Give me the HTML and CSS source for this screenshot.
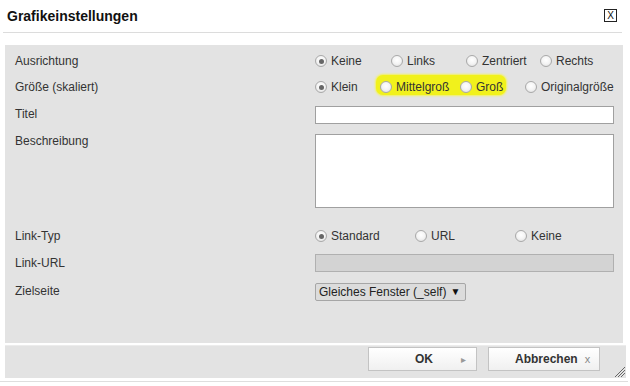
FILE: index.html
```html
<!DOCTYPE html>
<html lang="de">
<head>
<meta charset="utf-8">
<title>Grafikeinstellungen</title>
<link rel="stylesheet" href="styles.css">
</head>
<body>
<div class="dialog">
  <div class="titlebar">
    <span class="title">Grafikeinstellungen</span>
    <span class="close">X</span>
  </div>
  <div class="panel">
    <div class="row">
      <div class="label">Ausrichtung</div>
      <div class="opts opts-align">
        <label class="opt"><span class="radio on"></span>Keine</label>
        <label class="opt"><span class="radio"></span>Links</label>
        <label class="opt"><span class="radio"></span>Zentriert</label>
        <label class="opt"><span class="radio"></span>Rechts</label>
      </div>
    </div>
    <div class="row">
      <div class="label">Größe (skaliert)</div>
      <div class="opts opts-size">
        <label class="opt"><span class="radio on"></span>Klein</label>
        <span class="marker">
          <label class="opt opt-mid"><span class="radio"></span>Mittelgroß</label>
          <label class="opt"><span class="radio"></span>Groß</label>
        </span>
        <label class="opt opt-orig"><span class="radio"></span>Originalgröße</label>
      </div>
    </div>
    <div class="row row-input">
      <div class="label">Titel</div>
      <div class="field"><span class="input"></span></div>
    </div>
    <div class="row row-area">
      <div class="label">Beschreibung</div>
      <div class="field"><span class="textarea"></span></div>
    </div>
    <div class="row row-link">
      <div class="label">Link-Typ</div>
      <div class="opts opts-link">
        <label class="opt"><span class="radio on"></span>Standard</label>
        <label class="opt"><span class="radio"></span>URL</label>
        <label class="opt"><span class="radio"></span>Keine</label>
      </div>
    </div>
    <div class="row row-url">
      <div class="label">Link-URL</div>
      <div class="field"><span class="input disabled"></span></div>
    </div>
    <div class="row row-target">
      <div class="label">Zielseite</div>
      <div class="field"><span class="select">Gleiches Fenster (_self) <span class="caret">▼</span></span></div>
    </div>
  </div>
  <div class="footer">
    <button class="btn btn-ok">OK <span class="btn-icon arrow">&#9656;</span></button>
    <button class="btn btn-cancel">Abbrechen <span class="btn-icon">x</span></button>
    <svg class="grip" width="12" height="12" viewBox="0 0 12 12">
      <line x1="2" y1="12" x2="12" y2="2" stroke="#666" stroke-width="1"/>
      <line x1="5" y1="12" x2="12" y2="5" stroke="#666" stroke-width="1"/>
      <line x1="8" y1="12" x2="12" y2="8" stroke="#666" stroke-width="1"/>
    </svg>
  </div>
  <div class="bottomline"></div>
</div>
</body>
</html>
```
FILE: styles.css
```css
* { box-sizing: border-box; }
html, body { margin: 0; padding: 0; background: #fff; }
body {
  font-family: "Liberation Sans", Arial, sans-serif;
  font-size: 12px;
  color: #333;
}
.dialog { width: 630px; height: 386px; position: relative; }

.titlebar {
  height: 33px;
  margin: 0 8px 0 3px;
  padding: 0 4px 1px 4px;
  display: flex;
  align-items: center;
  justify-content: space-between;
  border-bottom: 1px solid #dcdcdc;
}
.title { font-weight: bold; font-size: 14px; color: #111; }
.close {
  width: 13px; height: 13px;
  border: 1px solid #222;
  font-size: 10px;
  line-height: 11px;
  text-align: center;
  color: #111;
  margin-right: 1px;
}

.panel {
  margin: 12px 0 0 5px;
  width: 618px;
  height: 298px;
  background: #e3e3e3;
  padding: 3px 9px 0 10px;
}
.row {
  display: grid;
  grid-template-columns: 300px 299px;
  height: 26px;
  align-items: center;
}
.label { color: #333; }
.opts { display: flex; align-items: center; height: 100%; }
.opt { display: flex; align-items: center; white-space: nowrap; flex: none; }
.radio {
  width: 12px; height: 12px;
  border-radius: 50%;
  border: 1px solid #a9a9a9;
  background: radial-gradient(circle at 50% 40%, #fff 0%, #f4f4f4 50%, #d8d8d8 100%);
  margin-right: 4px;
  position: relative;
  flex: none;
}
.radio.on::after {
  content: "";
  position: absolute;
  left: 2.5px; top: 2.5px;
  width: 5px; height: 5px;
  border-radius: 50%;
  background: #666;
}
.opts-align .opt:nth-child(1) { width: 76px; }
.opts-align .opt:nth-child(2) { width: 75px; }
.opts-align .opt:nth-child(3) { width: 74px; }
.opts-size > .opt:first-child { width: 65px; }
.marker {
  flex: none;
  display: flex;
  align-items: center;
  background: #f1f11c;
  border-radius: 7px;
  height: 20px;
  margin-left: -4px;
  padding-left: 4px;
  width: 130px;
  box-shadow: 0 0 2px 1px #f3f35a;
  margin-top: -4px;
}
.marker .opt { margin-top: 4px; }
.opt-mid { width: 80px; }
.marker .opt:last-child { width: 46px; }
.opt-orig { margin-left: 19px; }
.opts-link .opt { width: 100px; }

.field { display: flex; }
.row-input { height: 28px; }
.row-input .field { padding-top: 2px; }
.input {
  display: block;
  width: 299px; height: 18px;
  background: #fff;
  border: 1px solid #a0a0a0;
}
.input.disabled { background: #d3d3d3; border-color: #b0b0b0; }
.row-area { height: 80px; align-items: start; padding-top: 6px; }
.textarea {
  display: block;
  width: 299px; height: 74px;
  background: #fff;
  border: 1px solid #a0a0a0;
}
.row-link { margin-top: 15px; }
.row-url { height: 27px; }
.row-url .field { padding-top: 1px; }
.row-target { height: 29px; }
.row-target .field { padding-top: 2px; }
.select {
  display: inline-flex;
  align-items: center;
  height: 18px;
  width: 151px;
  padding-left: 3px;
  background: #dcdcdc;
  border: 1px solid #a6a6a6;
  border-radius: 2px;
  color: #222;
  white-space: nowrap;
}
.caret { font-size: 10px; margin-left: 4px; color: #111; }

.footer {
  position: relative;
  margin: 2px 0 0 5px;
  width: 621px;
  height: 33px;
  background: #e3e3e3;
  border-top: 1px solid #ececec;
  display: flex;
  justify-content: flex-end;
  align-items: flex-start;
  gap: 11px;
  padding: 1px 26px 0 0;
}
.btn {
  height: 24px;
  border: 1px solid #c3c3c3;
  background: linear-gradient(#ffffff, #f0f0f0);
  font-family: "Liberation Sans", Arial, sans-serif;
  font-size: 12px;
  font-weight: bold;
  color: #333;
  display: flex;
  align-items: center;
  padding: 0;
}
.btn-ok { width: 109px; padding-left: 46px; }
.btn-ok .arrow { margin-left: 28px; color: #999; font-size: 10px; font-weight: normal; }
.btn-cancel { width: 112px; padding-left: 26px; }
.btn-cancel .btn-icon { margin-left: 7px; color: #888; font-weight: normal; font-size: 11px; }
.grip { position: absolute; right: 1px; bottom: 1px; }
.bottomline {
  margin: 3px 0 0 0;
  width: 628px;
  border-top: 1px solid #dedede;
}
```
